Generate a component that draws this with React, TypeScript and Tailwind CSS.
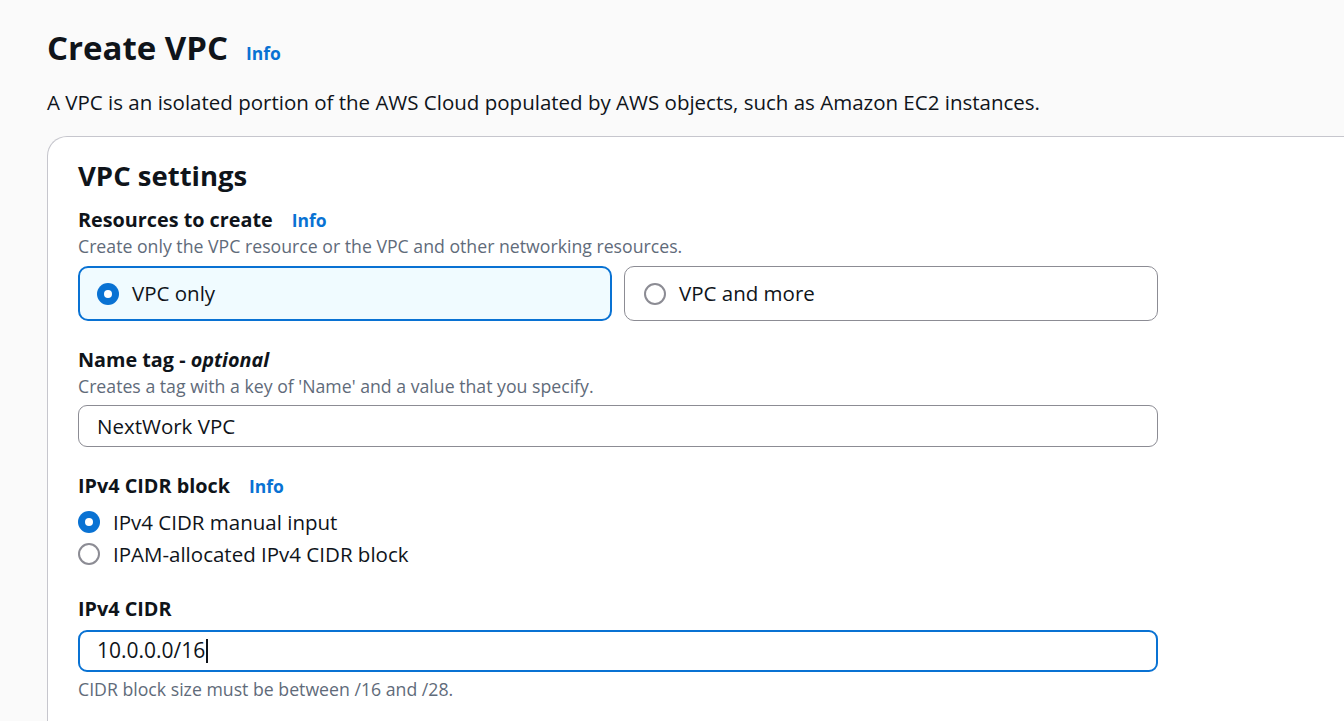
const font = { fontFamily: '"Open Sans", "Noto Sans", sans-serif' };

function Info({ className = "" }: { className?: string }) {
  return <span className={`font-bold text-[#0972d3] ${className}`}>Info</span>;
}

function Radio({ checked }: { checked: boolean }) {
  return checked ? (
    <span className="flex h-[22px] w-[22px] shrink-0 items-center justify-center rounded-full bg-[#0972d3]">
      <span className="h-[8px] w-[8px] rounded-full bg-white" />
    </span>
  ) : (
    <span className="h-[22px] w-[22px] shrink-0 rounded-full border-2 border-[#8c8c94] bg-white" />
  );
}

export default function App() {
  return (
    <div className="min-h-screen overflow-hidden bg-[#fafafa] text-[#0f141a]" style={font}>
      <div className="pl-[47px] pt-[24px]">
        <div className="flex items-baseline gap-[18px]">
          <h1 className="text-[33px] font-bold leading-[48px] text-[#0f141a]">Create VPC</h1>
          <Info className="text-[17.5px]" />
        </div>
        <p className="mt-[16px] text-[20.5px] leading-[28px]">
          A VPC is an isolated portion of the AWS Cloud populated by AWS objects, such as Amazon EC2 instances.
        </p>

        <div className="mt-[20px] min-h-[600px] rounded-tl-[20px] border-l border-t border-[#c6c6cd] bg-white pl-[30px] pt-[20px]">
          <h2 className="text-[27.5px] font-bold leading-[38px]">VPC settings</h2>

          <div className="mt-[11px] w-[1080px]">
            <div className="flex items-baseline gap-[19px]">
              <span className="text-[19.8px] font-bold leading-[28px]">Resources to create</span>
              <Info className="text-[17.5px]" />
            </div>
            <p className="text-[17.7px] leading-[24px] text-[#5f6b7a]">
              Create only the VPC resource or the VPC and other networking resources.
            </p>
            <div className="mt-[8px] grid grid-cols-2 gap-[12px]">
              <div className="flex h-[55px] items-center gap-[13px] rounded-[10px] border-2 border-[#0972d3] bg-[#f0fbff] px-[17px]">
                <Radio checked />
                <span className="text-[20.5px]">VPC only</span>
              </div>
              <div className="flex h-[55px] items-center gap-[13px] rounded-[10px] border border-[#8c8c94] bg-white px-[19px]">
                <Radio checked={false} />
                <span className="text-[20.5px]">VPC and more</span>
              </div>
            </div>

            <div className="mt-[25px]">
              <div className="text-[19.8px] font-bold leading-[28px]">
                Name tag - <i>optional</i>
              </div>
              <p className="text-[17.7px] leading-[24px] text-[#5f6b7a]">
                Creates a tag with a key of 'Name' and a value that you specify.
              </p>
              <div className="mt-[7px] flex h-[42px] items-center rounded-[9px] border border-[#8c8c94] bg-white px-[18px] text-[20.5px]">
                NextWork VPC
              </div>
            </div>

            <div className="mt-[25px]">
              <div className="flex items-baseline gap-[19px]">
                <span className="text-[19.8px] font-bold leading-[28px]">IPv4 CIDR block</span>
                <Info className="text-[17.5px]" />
              </div>
              <div className="mt-[10px] flex flex-col gap-[8px]">
                <div className="flex h-[24px] items-center gap-[13px]">
                  <Radio checked />
                  <span className="text-[20.5px] leading-[24px]">IPv4 CIDR manual input</span>
                </div>
                <div className="flex h-[24px] items-center gap-[13px]">
                  <Radio checked={false} />
                  <span className="text-[20.5px] leading-[24px]">IPAM-allocated IPv4 CIDR block</span>
                </div>
              </div>
            </div>

            <div className="mt-[29px]">
              <div className="text-[19.8px] font-bold leading-[28px]">IPv4 CIDR</div>
              <div className="mt-[7px] flex h-[42px] items-center rounded-[9px] border-2 border-[#0972d3] bg-white px-[17px] text-[21px]">
                10.0.0.0/16
                <span className="ml-px inline-block h-[24px] w-[2px] bg-[#0f141a]" />
              </div>
              <p className="mt-[5px] text-[17.7px] leading-[24px] text-[#5f6b7a]">
                CIDR block size must be between /16 and /28.
              </p>
            </div>
          </div>
        </div>
      </div>
    </div>
  );
}
